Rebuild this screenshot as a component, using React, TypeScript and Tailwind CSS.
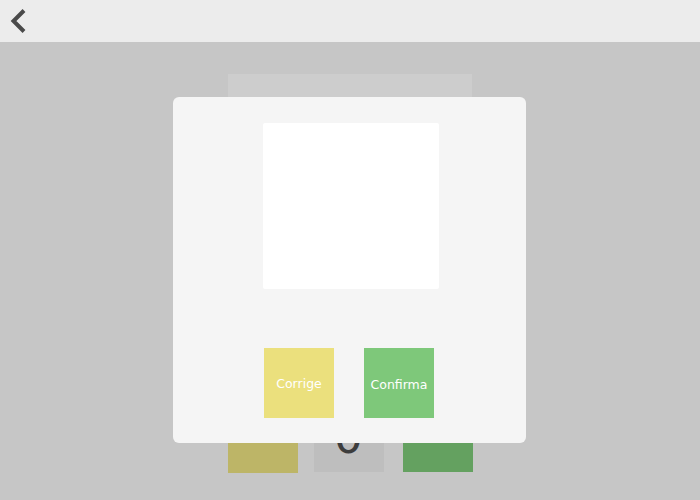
export default function App() {
  return (
    <div className="relative flex h-[500px] w-[700px] flex-col overflow-hidden font-['DejaVu_Sans',sans-serif]">
      <header className="flex h-[42px] shrink-0 items-start bg-[#ececec]">
        <svg width="30" height="42" viewBox="0 0 30 42" fill="none">
          <polyline
            points="24,10.5 13.5,21 24,31.5"
            stroke="#4a4a4a"
            strokeWidth="4"
            strokeLinecap="butt"
            strokeLinejoin="miter"
          />
        </svg>
      </header>

      <main className="relative flex flex-1 flex-col items-center bg-[#c6c6c6] pt-[32px]">
        <div className="h-[310px] w-[244px] bg-[#cdcdcd]" />
        <div className="mt-[18px] flex w-[245px] items-start">
          <div className="mt-[1px] h-[70px] w-[70px] bg-[#bdb567]" />
          <div className="ml-[16px] flex h-[70px] w-[70px] items-center justify-center bg-[#bebebe] text-[46px] leading-none text-[#3d3d3d]">
            0
          </div>
          <div className="ml-[19px] h-[70px] w-[70px] bg-[#64a160]" />
        </div>

        <div className="absolute inset-0 flex justify-start pl-[173px] pt-[55px]">
          <div className="h-[346px] w-[353px] rounded-[6px] bg-[#f5f5f5] pt-[26px]">
            <div className="ml-[90px] h-[166px] w-[176px] rounded-[2px] bg-white" />
            <div className="ml-[91px] mt-[59px] flex gap-[30px]">
              <button className="flex h-[70px] w-[70px] items-center justify-center bg-[#ebe07d] pt-[3px] text-[12.5px] text-white">
                Corrige
              </button>
              <button className="flex h-[70px] w-[70px] items-center justify-center bg-[#7ec87a] pt-[4px] text-[12.5px] text-white">
                Confirma
              </button>
            </div>
          </div>
        </div>
      </main>
    </div>
  )
}
